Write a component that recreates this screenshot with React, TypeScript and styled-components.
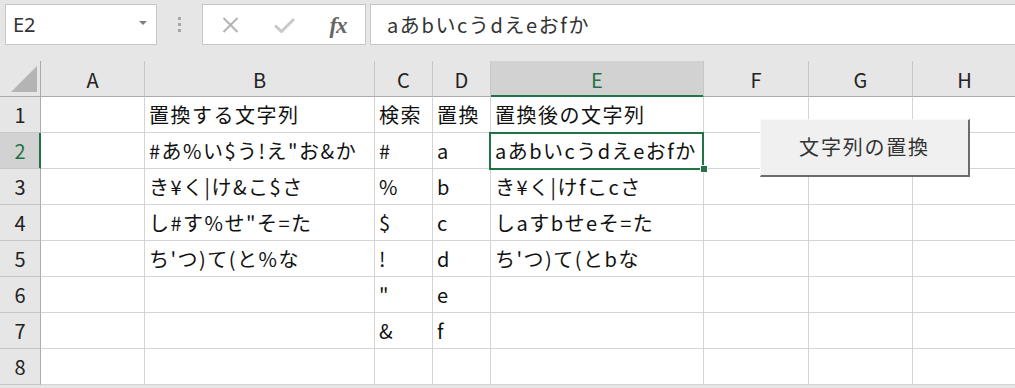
import styled, { createGlobalStyle } from 'styled-components';

const GREEN = '#217346';
const CJK = '"Noto Sans CJK JP", "Noto Sans", sans-serif';

const GlobalStyle = createGlobalStyle`
  html, body {
    margin: 0;
    padding: 0;
    background: #e6e6e6;
    overflow: hidden;
  }
`;

const Page = styled.div`
  position: relative;
  width: 1015px;
  height: 388px;
  overflow: hidden;
  background: #e6e6e6;
  font-family: ${CJK};
  color: #222;
`;

const TopBar = styled.div`
  display: flex;
  align-items: flex-start;
  height: 61px;
  box-sizing: border-box;
  padding: 4px 0 0 5px;
`;

const NameBox = styled.div`
  box-sizing: border-box;
  width: 152px;
  height: 41px;
  background: #fff;
  border: 1px solid #c6c6c6;
  display: flex;
  align-items: center;
  justify-content: space-between;
  padding: 0 9px 0 7px;
  font-family: "Noto Sans", "Liberation Sans", sans-serif;
  font-size: 20px;
  color: #333;
`;

const DropArrow = styled.span`
  width: 0;
  height: 0;
  border-left: 4px solid transparent;
  border-right: 4px solid transparent;
  border-top: 4px solid #7f7f7f;
  margin-top: -4px;
`;

const Grip = styled.div`
  width: 45px;
  height: 41px;
  display: flex;
  flex-direction: column;
  align-items: center;
  justify-content: center;
  gap: 3px;

  & > span {
    width: 3px;
    height: 3px;
    background: #a6a6a6;
  }
`;

const IconBox = styled.div`
  box-sizing: border-box;
  width: 164px;
  height: 41px;
  background: #fff;
  border: 1px solid #c6c6c6;
  display: flex;
`;

const IconSlot = styled.div`
  flex: 1;
  display: flex;
  align-items: center;
  justify-content: center;
`;

const Fx = styled.span`
  font-family: "Liberation Serif", "DejaVu Serif", serif;
  font-style: italic;
  font-weight: bold;
  font-size: 23px;
  line-height: 1;
  color: #666;
  letter-spacing: -1px;
  margin-top: 1px;
`;

const FormulaInput = styled.div`
  box-sizing: border-box;
  flex: 1;
  margin-left: 4px;
  height: 41px;
  background: #fff;
  border: 1px solid #c6c6c6;
  border-right: none;
  display: flex;
  align-items: center;
  padding-left: 16px;
  font-size: 20px;
  letter-spacing: 1.6px;
  color: #333;
`;

const Sheet = styled.div<{ $cols: string }>`
  display: grid;
  grid-template-columns: ${(p) => p.$cols};
  grid-auto-rows: 36px;
  background: #fff;
`;

const Corner = styled.div`
  box-sizing: border-box;
  background: #e6e6e6;
  border-right: 1px solid #ababab;
  border-bottom: 1px solid #ababab;
  display: flex;
  align-items: flex-end;
  justify-content: flex-end;
  padding: 0 3px 4px 0;
`;

const ColHead = styled.div<{ $active?: boolean }>`
  box-sizing: border-box;
  background: ${(p) => (p.$active ? '#d2d2d2' : '#e6e6e6')};
  border-right: 1px solid #c6c6c6;
  border-bottom: 1px solid ${(p) => (p.$active ? GREEN : '#ababab')};
  box-shadow: ${(p) => (p.$active ? `inset 0 -1px 0 ${GREEN}` : 'none')};
  display: flex;
  align-items: center;
  justify-content: center;
  font-size: 20px;
  color: ${(p) => (p.$active ? GREEN : '#222')};
  padding-top: 1px;
`;

const RowHead = styled.div<{ $active?: boolean }>`
  box-sizing: border-box;
  background: ${(p) => (p.$active ? '#d2d2d2' : '#e6e6e6')};
  border-right: 1px solid ${(p) => (p.$active ? GREEN : '#ababab')};
  border-bottom: 1px solid #c6c6c6;
  box-shadow: ${(p) => (p.$active ? `inset -1px 0 0 ${GREEN}` : 'none')};
  display: flex;
  align-items: center;
  justify-content: center;
  font-size: 20px;
  color: ${(p) => (p.$active ? GREEN : '#222')};
`;

const Cell = styled.div<{ $selected?: boolean }>`
  position: relative;
  box-sizing: border-box;
  border-right: 1px solid #d4d4d4;
  border-bottom: 1px solid #d4d4d4;
  display: flex;
  align-items: center;
  padding: 0 0 0 4px;
  font-size: 20px;
  letter-spacing: 1.5px;
  white-space: nowrap;
  color: #111;

  ${(p) =>
    p.$selected &&
    `
    &::before {
      content: '';
      position: absolute;
      top: -1px;
      left: -2px;
      right: -1px;
      bottom: -2px;
      border: 2px solid ${GREEN};
      z-index: 2;
      pointer-events: none;
    }
    &::after {
      content: '';
      position: absolute;
      right: -4px;
      bottom: -4px;
      width: 6px;
      height: 6px;
      background: ${GREEN};
      outline: 1px solid #fff;
      z-index: 3;
    }
  `}
`;

const ReplaceButton = styled.button`
  position: absolute;
  left: 760px;
  top: 119px;
  width: 210px;
  height: 58px;
  box-sizing: border-box;
  background: #f0f0f0;
  border: none;
  border-top: 1px solid #fafafa;
  border-left: 1px solid #fafafa;
  border-right: 2px solid #6b6b6b;
  border-bottom: 2px solid #6b6b6b;
  font-family: ${CJK};
  font-size: 20px;
  letter-spacing: 1.8px;
  color: #333;
  padding: 0 0 3px;
  cursor: pointer;
  z-index: 4;
`;

const columns = [
  { id: 'A', width: 104 },
  { id: 'B', width: 230 },
  { id: 'C', width: 58 },
  { id: 'D', width: 58 },
  { id: 'E', width: 213 },
  { id: 'F', width: 105 },
  { id: 'G', width: 104 },
  { id: 'H', width: 104 },
];

const rows: Record<string, string>[] = [
  { B: '置換する文字列', C: '検索', D: '置換', E: '置換後の文字列' },
  { B: '#あ%い$う!え"お&か', C: '#', D: 'a', E: 'aあbいcうdえeおfか' },
  { B: 'き¥く|け&こ$さ', C: '%', D: 'b', E: 'き¥く|けfこcさ' },
  { B: 'し#す%せ"そ=た', C: '$', D: 'c', E: 'しaすbせeそ=た' },
  { B: "ち'つ)て(と%な", C: '!', D: 'd', E: "ち'つ)て(とbな" },
  { C: '"', D: 'e' },
  { C: '&', D: 'f' },
  {},
];

const activeCol = 'E';
const activeRow = 2;

const App = () => {
  const cols = ['41px', ...columns.map((c) => `${c.width}px`)].join(' ');

  return (
    <Page>
      <GlobalStyle />
      <TopBar>
        <NameBox>
          <span>E2</span>
          <DropArrow />
        </NameBox>
        <Grip>
          <span />
          <span />
          <span />
        </Grip>
        <IconBox>
          <IconSlot>
            <svg width="17" height="16" viewBox="0 0 17 16">
              <path d="M1.5 1 L15.5 15 M15.5 1 L1.5 15" stroke="#b3b3b3" strokeWidth="2" fill="none" />
            </svg>
          </IconSlot>
          <IconSlot>
            <svg width="21" height="16" viewBox="0 0 21 16">
              <path d="M1 8.5 L7.5 14.5 L20 2" stroke="#c9c9c9" strokeWidth="3" fill="none" />
            </svg>
          </IconSlot>
          <IconSlot>
            <Fx>fx</Fx>
          </IconSlot>
        </IconBox>
        <FormulaInput>aあbいcうdえeおfか</FormulaInput>
      </TopBar>

      <Sheet $cols={cols}>
        <Corner>
          <svg width="26" height="26" viewBox="0 0 26 26">
            <polygon points="0,26 26,26 26,0" fill="#b4b4b4" />
          </svg>
        </Corner>
        {columns.map((c) => (
          <ColHead key={c.id} $active={c.id === activeCol}>
            {c.id}
          </ColHead>
        ))}
        {rows.map((row, i) => {
          const n = i + 1;
          return [
            <RowHead key={`h${n}`} $active={n === activeRow}>
              {n}
            </RowHead>,
            ...columns.map((c) => (
              <Cell key={`${c.id}${n}`} $selected={c.id === activeCol && n === activeRow}>
                {row[c.id] ?? ''}
              </Cell>
            )),
          ];
        })}
      </Sheet>

      <ReplaceButton>文字列の置換</ReplaceButton>
    </Page>
  );
};

export default App;
